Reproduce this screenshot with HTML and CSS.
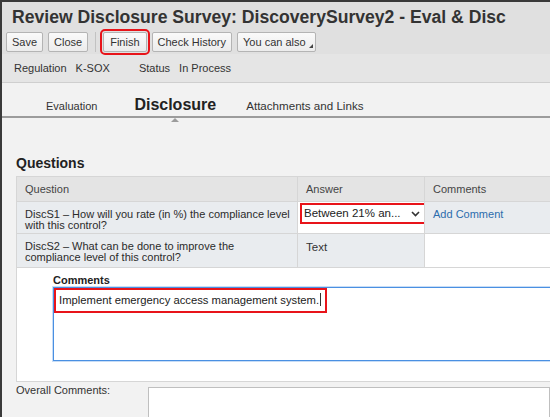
FILE: index.html
```html
<!DOCTYPE html>
<html>
<head>
<meta charset="utf-8">
<link rel="stylesheet" href="styles.css">
</head>
<body>
<div class="frame">
  <div class="header">
    <h1 class="title">Review Disclosure Survey: DiscoverySurvey2 - Eval &amp; Disc</h1>
    <div class="toolbar">
      <span class="btn">Save</span>
      <span class="btn">Close</span>
      <span class="sep"></span>
      <span class="btn btn-mark">Finish</span>
      <span class="btn">Check History</span>
      <span class="btn btn-more">You can also</span>
    </div>
  </div>
  <div class="meta">
    <span class="meta-label">Regulation</span><span class="meta-value">K-SOX</span>
    <span class="meta-label meta-label2">Status</span><span class="meta-value">In Process</span>
  </div>
  <div class="tabs">
    <span class="tab tab-eval">Evaluation</span>
    <span class="tab tab-active">Disclosure</span>
    <span class="tab tab-att">Attachments and Links</span>
  </div>
  <div class="content">
    <h2 class="section">Questions</h2>
    <table class="qtable">
      <colgroup><col class="c1"><col class="c2"><col class="c3"></colgroup>
      <tr class="head">
        <th>Question</th><th>Answer</th><th>Comments</th>
      </tr>
      <tr class="row row1">
        <td class="q">DiscS1 – How will you rate (in %) the compliance level with this control?</td>
        <td class="ans white"><div class="select"><span>Between 21% an...</span><svg class="caret" width="9" height="6" viewBox="0 0 9 6"><path d="M1 1 L4.5 4.5 L8 1" fill="none" stroke="#333" stroke-width="1.6"/></svg></div></td>
        <td class="cm"><span class="link">Add Comment</span></td>
      </tr>
      <tr class="row row2">
        <td class="q">DiscS2 – What can be done to improve the<br>compliance level of this control?</td>
        <td class="ans2">Text</td>
        <td class="cm white"></td>
      </tr>
      <tr class="expand">
        <td colspan="3">
          <div class="cm-label">Comments</div>
          <div class="textarea"><span class="typed">Implement emergency access management system.<span class="cursor"></span></span></div>
        </td>
      </tr>
    </table>
    <div class="overall">
      <span class="overall-label">Overall Comments:</span>
      <div class="overall-box"></div>
    </div>
  </div>
</div>
</body>
</html>
```
FILE: styles.css
```css
html, body {
  margin: 0;
  padding: 0;
}
body {
  width: 550px;
  height: 417px;
  overflow: hidden;
  font-family: "Liberation Sans", Arial, sans-serif;
  font-size: 11px;
  color: #333;
  background: #f2f2f2;
}
.frame {
  border-top: 2px solid #3a3a3a;
  border-left: 2px solid #3a3a3a;
  height: 415px;
  width: 548px;
  overflow: hidden;
  background: #f2f2f2;
}
.header {
  background: #e0e0e0;
  height: 52px;
}
.title {
  margin: 0;
  padding: 4px 0 0 10px;
  font-size: 17.6px;
  line-height: 22px;
  font-weight: bold;
  color: #333;
  white-space: nowrap;
}
.toolbar {
  display: flex;
  align-items: center;
  padding: 4px 0 0 4px;
  gap: 5px;
}
.btn {
  display: inline-block;
  height: 18px;
  line-height: 18px;
  padding: 0 5px;
  border: 1px solid #b4b4b4;
  border-radius: 2px;
  background: linear-gradient(#fafafa, #ececec);
  font-size: 11px;
  color: #333;
  position: relative;
}
.sep {
  width: 1px;
  height: 20px;
  background: #c2c2c2;
  margin: 0 2px;
}
.btn-mark {
  outline: 2px solid #e8141a;
  outline-offset: 1px;
  padding: 0 6px;
}
.btn-more {
  padding-right: 9px;
}
.btn-more::after {
  content: "";
  position: absolute;
  right: 2px;
  bottom: 3px;
  border-left: 4px solid transparent;
  border-bottom: 4px solid #444;
}
.meta {
  height: 28px;
  line-height: 28px;
  background: #e5e5e5;
  border-bottom: 1px solid #cfcfcf;
  padding-left: 12px;
  font-size: 11px;
  white-space: nowrap;
}
.meta-value {
  margin-left: 9px;
}
.meta-label2 {
  margin-left: 26px;
}
.tabs {
  display: flex;
  align-items: baseline;
  height: 35px;
  padding-left: 44px;
  border-bottom: 2px solid #9c9c9c;
  box-sizing: border-box;
  padding-top: 13px;
  white-space: nowrap;
}
.tab {
  font-size: 11px;
  color: #333;
  position: relative;
}
.tab-att {
  font-size: 11.6px;
}
.tab-eval {
  margin-right: 37px;
}
.tab-active {
  font-size: 16px;
  font-weight: bold;
  color: #222;
  margin-right: 30px;
}
.tab-active::after {
  content: "";
  position: absolute;
  left: 50%;
  margin-left: -4px;
  bottom: -8px;
  border-left: 4px solid transparent;
  border-right: 4px solid transparent;
  border-bottom: 4px solid #9c9c9c;
}
.content {
  padding-left: 14px;
}
.section {
  margin: 0;
  padding-top: 37px;
  font-size: 14px;
  line-height: 17px;
  font-weight: bold;
  color: #222;
  height: 19px;
}
.qtable {
  border-collapse: collapse;
  width: 620px;
  table-layout: fixed;
  margin-top: 2px;
}
.c1 { width: 281px; }
.c2 { width: 127px; }
.c3 { width: 212px; }
.qtable th {
  text-align: left;
  font-weight: normal;
  background: #e4e4e4;
  height: 25px;
  padding: 0 0 0 8px;
  border: 1px solid #d6d6d6;
  font-size: 11px;
  color: #444;
  box-sizing: border-box;
}
.qtable td {
  border: 1px solid #d6d6d6;
  vertical-align: top;
  background: #e9ecef;
  font-size: 11px;
  line-height: 11px;
  box-sizing: border-box;
}
.row1 td { height: 32px; }
.row2 td { height: 34px; }
.q {
  padding: 7px 0 0 8px;
  color: #2b2b2b;
}
.ans {
  padding: 1px 0 0 2px;
}
.ans2 {
  padding: 8px 0 0 8px;
  font-size: 11.5px !important;
}
.white { background: #fff !important; }
.select {
  display: flex;
  align-items: center;
  justify-content: space-between;
  width: 116px;
  height: 17px;
  border: 2px solid #e8141a;
  background: #fff;
  padding: 0 4px 0 2px;
  color: #222;
  font-size: 11.5px;
}
.caret { margin-top: 1px; }
.cm {
  padding: 7px 0 0 8px;
}
.link {
  color: #2c6dad;
}
.expand td {
  background: #fff;
  height: 114px;
  padding: 6px 0 0 36px;
  box-sizing: border-box;
}
.cm-label {
  font-weight: bold;
  font-size: 11px;
  line-height: 13px;
  color: #222;
  height: 13px;
}
.textarea {
  border: 1px solid #4a90e2;
  box-shadow: 0 0 0 1px rgba(74, 144, 226, 0.3);
  height: 72px;
  background: #fff;
}
.typed {
  display: inline-block;
  border: 2px solid #e8141a;
  height: 21px;
  line-height: 21px;
  padding: 0 4px 0 3px;
  font-size: 11.25px;
  color: #222;
  white-space: nowrap;
}
.cursor {
  display: inline-block;
  width: 1px;
  height: 13px;
  background: #333;
  vertical-align: -2px;
  margin-left: 1px;
}
.overall {
  display: flex;
  align-items: flex-start;
}
.overall-label {
  flex: 0 0 132px;
  padding-top: 2px;
  font-size: 11px;
  line-height: 13px;
  color: #333;
  white-space: nowrap;
}
.overall-box {
  flex: 1 0 auto;
  margin-top: 5px;
  height: 40px;
  background: #fff;
  border: 1px solid #bfbfbf;
}
```
